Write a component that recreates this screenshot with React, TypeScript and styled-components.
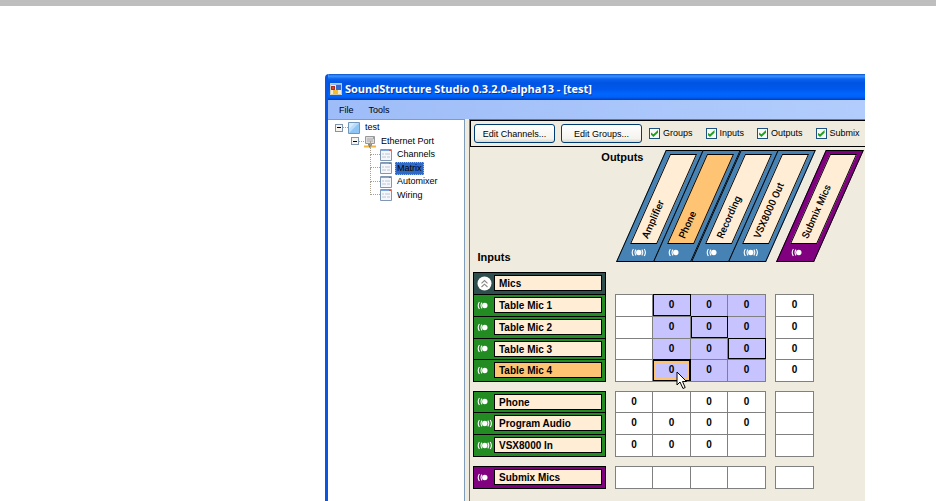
import React from "react";
import styled, { createGlobalStyle, css } from "styled-components";

const Global = createGlobalStyle`
  * { box-sizing: border-box; }
  body {
    margin: 0;
    background: #fff;
    color: #000;
    font: 9px/13px "Liberation Sans", Arial, sans-serif;
    overflow: hidden;
  }
`;

const Page = styled.div`
  display: flex;
  flex-direction: column;
  min-height: 100vh;
  border-top: 6px solid #bebebe;
`;

const AppWindow = styled.main`
  flex: 1;
  display: flex;
  flex-direction: column;
  margin: 68px 71px 0 325px;
  border-left: 3px solid #0a55e2;
  border-radius: 4px 0 0 0;
  overflow: hidden;
  background: #efebde;
`;

const TitleBar = styled.header`
  display: flex;
  align-items: center;
  gap: 3px;
  height: 26px;
  padding: 3px 0 0 2px;
  background: linear-gradient(#0a50c8 0, #3a94ff 2px, #0a62ee 5px, #0054e3 9px, #0058ec 15px, #0066ff 20px, #0062f8 23px, #003dc0 26px);
  h1 {
    margin: 0;
    color: #fff;
    font: bold 11px/16px "Open Sans", "Noto Sans", sans-serif;
    text-shadow: 1px 1px 0 #0b3697;
    white-space: nowrap;
  }
`;

const MenuBar = styled.nav`
  display: flex;
  gap: 15px;
  height: 19px;
  padding-left: 11px;
  background: linear-gradient(90deg, #9ebcf8, #b2cdfc);
`;

const MenuItem = styled.button`
  padding: 0;
  border: 0;
  background: none;
  color: #000;
  font: 9px/20px "Liberation Sans", Arial, sans-serif;
`;

const Body = styled.div`
  flex: 1;
  display: flex;
`;

const Tree = styled.div`
  display: grid;
  grid-auto-rows: 13px 14px;
  align-content: start;
  flex: none;
  width: 137px;
  padding: 1px 0 0 7px;
  border-top: 1px solid #7b9cc8;
  border-right: 1px solid #7f9db9;
  background: #fff;
`;

const TreeItem = styled.div<{ $level: number }>`
  display: flex;
  align-items: center;
  padding-left: ${(p) => [0, 16, 35][p.$level]}px;
`;

const TreeLabel = styled.span<{ $selected?: boolean }>`
  margin-left: 3px;
  padding: 0 2px;
  line-height: 13px;
  ${(p) => p.$selected && css`
    background: #316ac5;
    outline: 1px dotted #d8a860;
    outline-offset: -1px;
  `}
`;

const Toggle = styled.button`
  display: flex;
  align-items: center;
  justify-content: center;
  width: 8px;
  height: 8px;
  padding: 0;
  border: 1px solid #8095b0;
  background: #f7f5f0;
  &::before {
    content: "";
    width: 4px;
    height: 1px;
    background: #000;
  }
`;

const Link = styled.span`
  width: 5px;
  border-top: 1px dotted #a8a090;
`;

const Branch = styled.span`
  align-self: flex-start;
  width: 10px;
  height: 14px;
  margin-top: -7px;
  border-left: 1px dotted #a8a090;
  border-bottom: 1px dotted #a8a090;
`;

const Workspace = styled.section`
  flex: 1;
  min-width: 0;
  margin-left: 4px;
  border-left: 1px solid #77756a;
  border-top: 1px solid #77756a;
`;

const Toolbar = styled.div`
  display: flex;
  align-items: center;
  height: 27px;
  padding-left: 3px;
  border: 1px solid #000;
  border-right: 0;
  white-space: nowrap;
`;

const PushButton = styled.button`
  width: 81px;
  height: 19px;
  margin-right: 6px;
  padding: 0;
  border: 1px solid #003c74;
  border-radius: 3px;
  background: linear-gradient(#fff, #f4f3ee 80%, #dcd8cc);
  color: #000;
  font: 9px/16px "Liberation Sans", Arial, sans-serif;
`;

const Checks = styled.div`
  display: flex;
  gap: 13px;
  margin-left: 1px;
`;

const Check = styled.label`
  display: flex;
  align-items: center;
  gap: 3px;
  input {
    appearance: none;
    display: grid;
    place-items: center;
    width: 11px;
    height: 11px;
    margin: 0;
    border: 1px solid #1c5180;
    background: #f8f8f5;
  }
  input:checked::before {
    content: "";
    width: 7px;
    height: 7px;
    background: #21a121;
    clip-path: polygon(0 35%, 35% 62%, 100% 0, 100% 38%, 35% 100%, 0 68%);
  }
`;

const Matrix = styled.table`
  table-layout: fixed;
  border-collapse: collapse;
  width: 340px;
  margin-left: 3px;
  font: bold 10px/12px "Liberation Sans", Arial, sans-serif;
  th, td { padding: 0; }
`;

const Col = styled.col<{ $w: number }>`
  width: ${(p) => p.$w}px;
`;

const HeadRow = styled.tr`
  height: 125px;
`;

const Corner = styled.th`
  vertical-align: top;
`;

const CornerText = styled.div`
  display: flex;
  flex-direction: column;
  justify-content: space-between;
  width: 170px;
  height: 117px;
  padding: 4px 0 0 4px;
  font-size: 11px;
  line-height: 13px;
  text-align: left;
  span:first-child { align-self: flex-end; }
`;

const OutputHead = styled.th`
  position: relative;
  vertical-align: top;
`;

const Tab = styled.div<{ $color: string }>`
  width: 38px;
  height: 112px;
  margin-top: 3px;
  padding: 3px 4px 17px 5px;
  border: 1px solid #000;
  background: ${(p) => p.$color};
  transform: skewX(-24deg);
  transform-origin: left bottom;
`;

const TabFace = styled.div<{ $active?: boolean }>`
  height: 100%;
  border: 1px solid #000;
  background: ${(p) => (p.$active ? "#ffc473" : "#ffedd5")};
`;

const TabText = styled.span`
  position: absolute;
  left: 29px;
  top: 85px;
  font: 500 10px/12px Roboto, "Liberation Sans", sans-serif;
  white-space: nowrap;
  transform: rotate(-66deg);
  transform-origin: left center;
`;

const TabIcon = styled.span`
  position: absolute;
  left: 15px;
  top: 101px;
  display: flex;
`;

const Row = styled.tr<{ $compact?: boolean }>`
  height: ${(p) => (p.$compact ? 21 : 22)}px;
`;

const GapRow = styled.tr`
  height: 10px;
`;

const InputHead = styled.th<{ $color: string }>`
  border: 1px solid #000;
  background: ${(p) => p.$color};
`;

const InputInner = styled.div`
  display: grid;
  grid-template-columns: 20px 1fr;
  align-items: center;
  padding-right: 3px;
`;

const IconSlot = styled.span`
  display: flex;
  padding-left: 3px;
`;

const InputName = styled.span<{ $active?: boolean }>`
  height: 16px;
  padding-left: 4px;
  border: 1px solid #000;
  background: ${(p) => (p.$active ? "#ffc473" : "#ffedd5")};
  line-height: 15px;
  text-align: left;
  white-space: nowrap;
`;

const Cell = styled.td<{ $tone?: string }>`
  position: relative;
  border: 1px solid #808080;
  background: ${(p) => (p.$tone ? "#c6c3ff" : "#fff")};
  text-align: center;
  ${(p) => (p.$tone === "boxed" || p.$tone === "current") && css`
    outline: 1px solid #000;
    outline-offset: -1px;
  `}
  ${(p) => p.$tone === "current" && css`
    box-shadow: inset 0 0 0 1px #000, inset 0 0 0 3px #ffc473;
  `}
`;

const Pointer = styled.svg`
  position: absolute;
  left: 23px;
  top: 11px;
  z-index: 1;
`;

const Signal = ({ stereo }: { stereo?: boolean }) => (
  <svg width="16" height="9" viewBox="0 0 16 9" fill="none" stroke="#fff" strokeWidth="1.1">
    <path d="M2.4 1Q0 4.5 2.4 8M5 1.6Q3 4.5 5 7.4" />
    <circle cx="7.8" cy="4.5" r="2.7" fill="#fff" stroke="none" />
    {stereo && <path d="M10.8 1.6Q12.8 4.5 10.8 7.4M13.2 1Q15.6 4.5 13.2 8" />}
  </svg>
);

const Collapse = () => (
  <svg width="15" height="15" viewBox="0 0 15 15">
    <circle cx="7.5" cy="7.5" r="7" fill="#fff" />
    <path d="M4.5 7.3l3-2.8 3 2.8M4.5 11l3-2.8 3 2.8" fill="none" stroke="#888" strokeWidth="1.1" />
  </svg>
);

const AppIcon = () => (
  <svg width="12" height="12" viewBox="0 0 12 12">
    <rect width="12" height="12" fill="#f3ecd4" />
    <rect width="12" height="2" fill="#8fb8f4" />
    <rect x="1" y="3" width="4" height="4" fill="#d8432c" />
    <rect x="6" y="2" width="5" height="5" fill="#3569d0" />
    <rect x="3" y="7" width="5" height="4" fill="#f3bd2d" />
    <path d="M1.500 3.500h3v3h-3z" fill="none" stroke="#a82a20" />
    <path d="M.5.5h11v11H.5z" fill="none" stroke="#cfc9ae" />
  </svg>
);

const ProjectIcon = () => (
  <svg width="12" height="12" viewBox="0 0 12 12">
    <path d="M.5.5h11v11H.5z" fill="#b8dcfa" stroke="#7297bb" />
    <path d="M1 11L11 1v10z" fill="#8fc5f4" />
    <path d="M1 1h6L1 7z" fill="#d5ecfd" />
  </svg>
);

const PortIcon = () => (
  <svg width="12" height="13" viewBox="0 0 12 13">
    <path d="M1.500 1.500h9v7h-9z" fill="#ddd" stroke="#999" />
    <path d="M3 4h6M3 6h6" stroke="#aaa" />
    <path d="M9 3h1" stroke="#d33" />
    <path d="M4 9h4v2H4z" fill="#888" />
    <path d="M0 11.500h12" stroke="#f0b445" strokeWidth="2" />
    <path d="M5 11.500h2" stroke="#777" strokeWidth="2" />
  </svg>
);

const FormIcon = () => (
  <svg width="12" height="12" viewBox="0 0 12 12">
    <path d="M.5.5h11v11H.5z" fill="#f5f7fc" stroke="#8097b4" />
    <path d="M1 1.500h10" stroke="#7da4e0" />
    <path d="M9 1.500h2" stroke="#e0553c" />
    <path d="M2 5h2M5 5h5M2 8h4M7 8h3" stroke="#bcc5d3" />
  </svg>
);

const BLUE = "#4682b4";
const GREEN = "#228b22";
const PURPLE = "#800080";
const SLATE = "#2f4f4f";

type Output = { name: string; color: string; stereo?: boolean; active?: boolean };
const outputs: Output[] = [
  { name: "Amplifier", color: BLUE, stereo: true },
  { name: "Phone", color: BLUE, active: true },
  { name: "Recording", color: BLUE },
  { name: "VSX8000 Out", color: BLUE, stereo: true },
  { name: "Submix Mics", color: PURPLE },
];

type Input = {
  name: string;
  color: string;
  group?: boolean;
  stereo?: boolean;
  active?: boolean;
  compact?: boolean;
  values: string[];
  tones?: string[];
};
const sections: Input[][] = [
  [
    { name: "Mics", color: SLATE, group: true, values: [] },
    { name: "Table Mic 1", color: GREEN, values: ["", "0", "0", "0", "0"], tones: ["", "boxed", "on", "on"] },
    { name: "Table Mic 2", color: GREEN, values: ["", "0", "0", "0", "0"], tones: ["", "on", "boxed", "on"] },
    { name: "Table Mic 3", color: GREEN, compact: true, values: ["", "0", "0", "0", "0"], tones: ["", "on", "on", "boxed"] },
    { name: "Table Mic 4", color: GREEN, active: true, values: ["", "0", "0", "0", "0"], tones: ["", "current", "on", "on"] },
  ],
  [
    { name: "Phone", color: GREEN, compact: true, values: ["0", "", "0", "0", ""] },
    { name: "Program Audio", color: GREEN, stereo: true, values: ["0", "0", "0", "0", ""] },
    { name: "VSX8000 In", color: GREEN, stereo: true, values: ["0", "0", "0", "", ""] },
  ],
  [{ name: "Submix Mics", color: PURPLE, values: ["", "", "", "", ""] }],
];

const OutputTab = ({ output }: { output: Output }) => (
  <OutputHead scope="col">
    <Tab $color={output.color}>
      <TabFace $active={output.active} />
    </Tab>
    <TabText>{output.name}</TabText>
    <TabIcon><Signal stereo={output.stereo} /></TabIcon>
  </OutputHead>
);

const MatrixCell = ({ value, tone }: { value: string; tone?: string }) => (
  <Cell $tone={tone}>
    {value}
    {tone === "current" && (
      <Pointer width="12" height="19" viewBox="0 0 12 19">
        <path d="M1 1v13l3-3 3 6.500 2.200-1L6.500 10.500H10.500z" fill="#fff" stroke="#000" />
      </Pointer>
    )}
  </Cell>
);

const InputRow = ({ input }: { input: Input }) => (
  <Row $compact={input.compact}>
    <InputHead scope="row" $color={input.color}>
      <InputInner>
        <IconSlot>{input.group ? <Collapse /> : <Signal stereo={input.stereo} />}</IconSlot>
        <InputName $active={input.active}>{input.name}</InputName>
      </InputInner>
    </InputHead>
    {input.values.length > 0 && (
      <>
        <td />
        {input.values.slice(0, 4).map((v, i) => (
          <MatrixCell key={i} value={v} tone={input.tones?.[i]} />
        ))}
        <td />
        <MatrixCell value={input.values[4]} />
      </>
    )}
  </Row>
);

export default function App() {
  return (
    <>
      <Global />
      <Page>
        <AppWindow>
          <TitleBar>
            <AppIcon />
            <h1>SoundStructure Studio 0.3.2.0-alpha13 - [test]</h1>
          </TitleBar>
          <MenuBar>
            <MenuItem>File</MenuItem>
            <MenuItem>Tools</MenuItem>
          </MenuBar>
          <Body>
            <Tree role="tree">
              <TreeItem role="treeitem" $level={0}>
                <Toggle aria-label="Collapse test" />
                <Link />
                <ProjectIcon />
                <TreeLabel>test</TreeLabel>
              </TreeItem>
              <TreeItem role="treeitem" $level={1}>
                <Toggle aria-label="Collapse Ethernet Port" />
                <Link />
                <PortIcon />
                <TreeLabel>Ethernet Port</TreeLabel>
              </TreeItem>
              {["Channels", "Matrix", "Automixer", "Wiring"].map((name) => (
                <TreeItem key={name} role="treeitem" $level={2}>
                  <Branch />
                  <FormIcon />
                  <TreeLabel $selected={name === "Matrix"}>{name}</TreeLabel>
                </TreeItem>
              ))}
            </Tree>
            <Workspace>
              <Toolbar>
                <PushButton>Edit Channels...</PushButton>
                <PushButton>Edit Groups...</PushButton>
                <Checks>
                  {["Groups", "Inputs", "Outputs", "Submix"].map((name) => (
                    <Check key={name}>
                      <input type="checkbox" defaultChecked />
                      {name}
                    </Check>
                  ))}
                </Checks>
              </Toolbar>
              <Matrix>
                <colgroup>
                  {[132, 10, 37, 38, 37, 38, 10, 38].map((w, i) => (
                    <Col key={i} $w={w} />
                  ))}
                </colgroup>
                <thead>
                  <HeadRow>
                    <Corner>
                      <CornerText>
                        <span>Outputs</span>
                        <span>Inputs</span>
                      </CornerText>
                    </Corner>
                    <td />
                    {outputs.slice(0, 4).map((o) => (
                      <OutputTab key={o.name} output={o} />
                    ))}
                    <td />
                    <OutputTab output={outputs[4]} />
                  </HeadRow>
                </thead>
                {sections.map((rows, i) => (
                  <tbody key={i}>
                    {i > 0 && <GapRow><td colSpan={8} /></GapRow>}
                    {rows.map((r) => (
                      <InputRow key={r.name} input={r} />
                    ))}
                  </tbody>
                ))}
              </Matrix>
            </Workspace>
          </Body>
        </AppWindow>
      </Page>
    </>
  );
}
